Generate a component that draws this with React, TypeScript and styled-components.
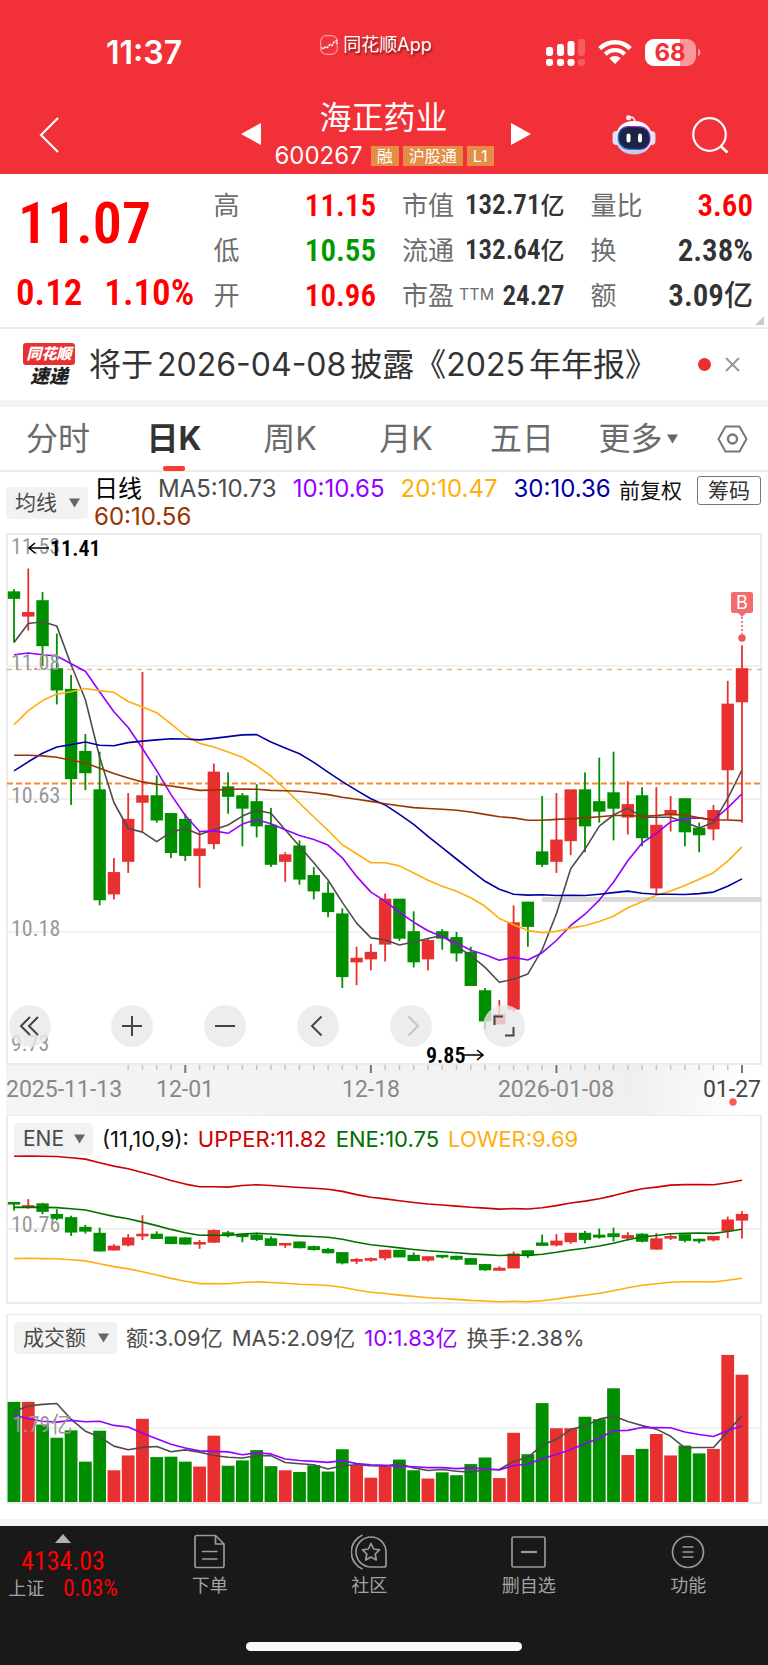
import React from "react";
import styled, { createGlobalStyle } from "styled-components";

/* ---------- palette and fonts ---------- */

const RED = "#e83030";
const GREEN = "#008f00";
const PRICE_UP = "#ff0000";
const PRICE_DOWN = "#009a00";
const GREY = "#4d4d4d";
const PURPLE = "#9500ff";
const AMBER = "#ffae0c";
const NAVY = "#0000a0";
const BROWN = "#993300";
const LINE = "#ececec";

const uiFont = `Inter, "Noto Sans CJK SC", sans-serif`;
const numberFont = `"Liberation Sans Narrow", "Roboto Condensed", Roboto, "Noto Sans CJK SC", sans-serif`;

const GlobalStyle = createGlobalStyle`
  *, *::before, *::after { box-sizing: border-box; }
  body { margin: 0; background: #fff; font-family: ${uiFont}; color: #333; }
  button, select { font: inherit; color: inherit; border: 0; background: none; padding: 0; margin: 0; }
  h1, p, dl, dd { margin: 0; font-weight: 400; }
  svg { display: block; }
`;

/* ---------- data ---------- */

// open, high, low, close
type Bar = [number, number, number, number];

const bars: Bar[] = [
  [11.33, 11.34, 11.16, 11.31], [11.25, 11.41, 11.2, 11.26], [11.3, 11.33, 11.08, 11.15], [11.07, 11.19, 10.95, 11.0],
  [11.0, 11.05, 10.61, 10.7], [10.79, 10.85, 10.66, 10.72], [10.66, 10.79, 10.27, 10.29], [10.31, 10.43, 10.29, 10.38],
  [10.42, 10.65, 10.38, 10.56], [10.62, 11.06, 10.52, 10.64], [10.64, 10.71, 10.55, 10.56], [10.58, 10.58, 10.43, 10.45],
  [10.56, 10.58, 10.42, 10.44], [10.44, 10.52, 10.33, 10.46], [10.48, 10.75, 10.46, 10.72], [10.67, 10.72, 10.58, 10.64],
  [10.64, 10.65, 10.47, 10.6], [10.62, 10.68, 10.5, 10.54], [10.54, 10.6, 10.4, 10.41], [10.42, 10.45, 10.35, 10.44],
  [10.47, 10.49, 10.34, 10.36], [10.37, 10.4, 10.29, 10.32], [10.31, 10.35, 10.23, 10.25], [10.24, 10.26, 9.99, 10.03],
  [10.08, 10.13, 10.0, 10.09], [10.09, 10.14, 10.05, 10.11], [10.14, 10.31, 10.08, 10.29], [10.29, 10.29, 10.15, 10.16],
  [10.18, 10.25, 10.06, 10.08], [10.09, 10.16, 10.05, 10.15], [10.18, 10.19, 10.12, 10.16], [10.16, 10.18, 10.08, 10.11],
  [10.11, 10.13, 10.0, 10.0], [9.98, 9.99, 9.85, 9.88], [9.87, 9.95, 9.87, 9.9], [9.92, 10.27, 9.91, 10.21],
  [10.28, 10.28, 10.13, 10.2], [10.45, 10.64, 10.4, 10.41], [10.42, 10.65, 10.38, 10.49], [10.49, 10.66, 10.44, 10.66],
  [10.66, 10.72, 10.45, 10.54], [10.62, 10.77, 10.55, 10.59], [10.65, 10.79, 10.49, 10.6], [10.57, 10.69, 10.51, 10.61],
  [10.64, 10.67, 10.47, 10.5], [10.33, 10.67, 10.31, 10.54], [10.58, 10.64, 10.52, 10.59], [10.63, 10.63, 10.47, 10.52],
  [10.53, 10.55, 10.45, 10.51], [10.53, 10.61, 10.49, 10.59], [10.73, 11.03, 10.56, 10.95], [10.96, 11.15, 10.55, 11.07],
];

// turnover, in hundreds of millions
const turnover = [
  2.43, 2.43, 1.88, 1.56, 1.74, 0.98, 1.73, 0.77, 1.13, 2.02, 1.09, 1.1, 0.98, 0.86, 1.61, 0.88, 1.01, 1.26, 0.87, 0.77,
  0.73, 0.89, 0.74, 1.28, 0.89, 0.59, 0.86, 1.03, 0.77, 0.57, 0.72, 0.65, 0.92, 1.08, 0.58, 1.68, 1.16, 2.4, 1.79, 1.79,
  2.07, 2.01, 2.76, 1.14, 1.29, 1.65, 1.13, 1.37, 1.18, 1.29, 3.57, 3.09,
];

const closes = bars.map((b) => b[3]);

// The first points of an average need days before the window, so they are given.
function average(values: number[], days: number, head: number[]): number[] {
  return values.map((_, i) =>
    i < head.length ? head[i] : values.slice(i - days + 1, i + 1).reduce((a, b) => a + b, 0) / days
  );
}

const ma5 = average(closes, 5, [11.16, 11.224, 11.23, 11.215]);
const ma10 = average(closes, 10, [11.118, 11.124, 11.118, 11.114, 11.088, 11.062, 10.993, 10.925, 10.872]);
const ma20 = average(closes, 20, [
  10.881, 10.929, 10.963, 10.985, 10.993, 11.004, 10.997, 10.991, 10.96, 10.941, 10.922, 10.884, 10.845, 10.818, 10.806,
  10.789, 10.771, 10.742, 10.708,
]);
const ma30 = average(closes, 30, [
  10.725, 10.756, 10.785, 10.806, 10.814, 10.823, 10.812, 10.81, 10.821, 10.826, 10.83, 10.834, 10.833, 10.83, 10.835,
  10.841, 10.847, 10.848, 10.823, 10.803, 10.783, 10.754, 10.721, 10.689, 10.659, 10.631, 10.61, 10.578, 10.544,
]);
const ma60 = [
  10.778, 10.778, 10.776, 10.771, 10.761, 10.752, 10.734, 10.716, 10.701, 10.688, 10.68, 10.674, 10.667, 10.659, 10.66,
  10.662, 10.664, 10.663, 10.659, 10.658, 10.656, 10.651, 10.645, 10.636, 10.629, 10.622, 10.614, 10.607, 10.601, 10.598,
  10.595, 10.592, 10.586, 10.578, 10.57, 10.566, 10.558, 10.558, 10.561, 10.563, 10.566, 10.57, 10.574, 10.574, 10.571,
  10.574, 10.578, 10.576, 10.566, 10.56, 10.559, 10.557,
];
const amount5 = average(turnover, 5, [2.2, 2.33, 2.37, 2.39]);
const amount10 = average(turnover, 10, [2.11, 2.02, 1.96, 1.94, 1.98, 1.95, 1.96, 1.86, 1.82]);

/* ---------- chart helpers ---------- */

const CHART_W = 756;
const STEP = (CHART_W - 28) / 51;
const xAt = (i: number) => 8 + i * STEP;

type Scale = (v: number) => number;

const Curve = ({ values, y, color }: { values: number[]; y: Scale; color: string }) => (
  <polyline
    fill="none"
    stroke={color}
    strokeWidth="1.6"
    strokeLinejoin="round"
    points={values.map((v, i) => `${xAt(i).toFixed(1)},${y(v).toFixed(1)}`).join(" ")}
  />
);

const Candles = ({ y }: { y: Scale }) => (
  <g>
    {bars.map(([open, high, low, close], i) => {
      const color = close >= open ? RED : GREEN;
      const top = y(Math.max(open, close));
      const bottom = y(Math.min(open, close));
      return (
        <g key={i} fill={color}>
          <rect x={xAt(i) - 0.9} y={y(high)} width="1.8" height={Math.max(1, y(low) - y(high))} />
          <rect x={xAt(i) - 6.2} y={top - 0.8} width="12.4" height={Math.max(1, bottom - top) + 1.6} />
        </g>
      );
    })}
  </g>
);

/* ---------- header ---------- */

const Page = styled.div`
  width: 100%;
  background: #fff;
`;

const Header = styled.header`
  background: #f23038;
  color: #fff;
`;

const StatusBar = styled.div`
  display: grid;
  grid-template-columns: 1fr auto 1fr;
  height: 106px;
  align-items: center;
`;

const Clock = styled.span`
  padding-left: 106px;
  font-size: 32px;
  line-height: 36px;
  font-weight: 600;
`;

const SourceApp = styled.span`
  display: flex;
  align-items: center;
  gap: 5px;
  padding: 0 16px 16px 0;
  font-size: 18px;
  line-height: 24px;
  text-shadow: 1px 2px 2px rgba(0, 0, 0, 0.5);
`;

const StatusIcons = styled.span`
  display: flex;
  justify-content: flex-end;
  align-items: center;
  gap: 13px;
  padding: 0 67px 2px 0;
`;

const NavBar = styled.nav`
  display: grid;
  grid-template-columns: 1fr auto 1fr;
  height: 68px;
  padding: 0 36px;
`;

const NavSide = styled.div<{ $end?: boolean }>`
  display: flex;
  align-items: center;
  gap: 36px;
  height: 58px;
  padding-right: ${(p) => (p.$end ? 3 : 0)}px;
  justify-content: ${(p) => (p.$end ? "flex-end" : "flex-start")};
`;

const IconButton = styled.button`
  display: flex;
  align-items: center;
  justify-content: center;
  cursor: pointer;
`;

const StockSwitcher = styled.div`
  display: flex;
  align-items: center;
  gap: 14px;
  margin-top: -12px;
  padding-left: 3px;
  height: 80px;
`;

const StockTitle = styled.div`
  display: flex;
  flex-direction: column;
  align-items: center;
  gap: 3px;
  width: 222px;
`;

const StockName = styled.h1`
  padding-right: 4px;
  font-size: 32px;
  line-height: 40px;
`;

const StockCode = styled.p`
  display: flex;
  align-items: center;
  gap: 4px;
  padding-right: 3px;
  font-size: 24px;
  line-height: 30px;
  white-space: nowrap;
`;

const Tag = styled.span`
  padding: 0 6px;
  background: #e38d46;
  font-size: 16px;
  line-height: 20px;
`;

const CodeText = styled.span`
  margin-right: 4px;
`;

/* ---------- quote ---------- */

const Quote = styled.section`
  position: relative;
  display: grid;
  grid-template-columns: minmax(0, 171fr) 162fr 162fr 162fr;
  column-gap: 26px;
  height: 155px;
  padding: 9px 15px 0 16px;
  border-bottom: 2px solid ${LINE};
`;

const PriceBlock = styled.div`
  color: ${PRICE_UP};
  font-family: ${numberFont};
  white-space: nowrap;
`;

const Price = styled.p`
  padding: 4px 0 0 2px;
  font-size: 58px;
  line-height: 72px;
  font-weight: 600;
`;

const Change = styled.p`
  display: flex;
  gap: 22px;
  padding-top: 4px;
  font-size: 37px;
  line-height: 60px;
  font-weight: 600;
`;

const Stats = styled.dl`
  display: flex;
  flex-direction: column;
`;

const Stat = styled.div`
  display: flex;
  justify-content: space-between;
  align-items: center;
  height: 45px;
  white-space: nowrap;
`;

const StatLabel = styled.dt`
  font-size: 26px;
  line-height: 32px;
  color: #6e6e6e;
`;

const Sup = styled.sup`
  margin-left: 5px;
  font-size: 16px;
  line-height: 16px;
  vertical-align: 5px;
`;

const StatValue = styled.dd<{ $color?: string; $small?: boolean }>`
  color: ${(p) => p.$color ?? "#333"};
  font-family: ${numberFont};
  font-size: ${(p) => (p.$small ? 27 : 31)}px;
  line-height: 40px;
  font-weight: 600;
`;

const Unit = styled.span<{ $small?: boolean }>`
  font-size: ${(p) => (p.$small ? 24 : 29)}px;
  font-weight: 500;
`;

const ExpandCorner = styled.svg`
  position: absolute;
  right: 4px;
  bottom: 2px;
`;

/* ---------- notice ---------- */

const Notice = styled.section`
  display: flex;
  align-items: center;
  height: 78px;
  padding: 0 28px 0 22px;
  border-bottom: 7px solid #f4f4f4;
`;

const NoticeText = styled.p`
  flex: 1;
  padding-left: 13px;
  font-size: 32px;
  line-height: 40px;
  white-space: nowrap;
  text-autospace: normal;
`;

const Dot = styled.span`
  width: 13px;
  height: 13px;
  margin-right: 14px;
  border-radius: 50%;
  background: ${RED};
`;

const NewsBadge = styled.span`
  display: flex;
  flex-direction: column;
  align-items: center;
  width: 54px;
  padding-top: 2px;
  font-style: italic;
  font-weight: 900;
`;

const BadgeTop = styled.span`
  padding: 0 3px;
  border-radius: 3px;
  background: ${RED};
  color: #fff;
  font-size: 15px;
  line-height: 22px;
  white-space: nowrap;
`;

const BadgeBottom = styled.span`
  font-size: 19px;
  line-height: 24px;
  color: #222;
`;

/* ---------- tabs ---------- */

const Tabs = styled.div`
  display: flex;
  align-items: stretch;
  height: 65px;
  border-bottom: 2px solid ${LINE};
`;

const Tab = styled.button<{ $active?: boolean }>`
  position: relative;
  display: flex;
  flex: 1;
  align-items: center;
  justify-content: center;
  gap: 4px;
  font-size: 32px;
  line-height: 40px;
  font-weight: ${(p) => (p.$active ? 700 : 400)};
  color: ${(p) => (p.$active ? "#333" : "#6b6b6b")};
  cursor: pointer;

  &::after {
    content: "";
    display: ${(p) => (p.$active ? "block" : "none")};
    position: absolute;
    left: calc(50% - 11px);
    bottom: -1px;
    width: 22px;
    height: 5px;
    border-radius: 2px;
    background: #fb3b30;
  }
`;

const SettingsButton = styled(IconButton)`
  width: 72px;
`;

/* ---------- indicators ---------- */

const Legend = styled.div`
  display: flex;
  align-items: flex-start;
  height: 61px;
  padding: 0 7px 0 6px;
`;

const Picker = styled.label<{ $top?: number }>`
  position: relative;
  display: inline-flex;
  flex: none;
  align-items: center;
  height: 32px;
  margin-top: ${(p) => p.$top ?? 0}px;
  border-radius: 4px;
  background: #f2f2f2;
  color: #4a4a4a;

  svg {
    position: absolute;
    right: 8px;
    pointer-events: none;
  }
`;

const PickerSelect = styled.select<{ $width: number }>`
  appearance: none;
  width: ${(p) => p.$width}px;
  height: 32px;
  padding: 0 0 0 9px;
  font-size: 21px;
  line-height: 32px;
`;

const LegendItems = styled.div`
  display: flex;
  flex: 1;
  flex-wrap: wrap;
  column-gap: 16px;
  padding: 3px 0 0 6px;
  font-size: 24px;
  line-height: 28px;
`;

const LegendItem = styled.span<{ $color: string }>`
  color: ${(p) => p.$color};
  white-space: nowrap;
`;

const AdjustButton = styled.button`
  flex: none;
  margin: 5px 15px 0 0;
  font-size: 21px;
  line-height: 28px;
  color: #111;
`;

const ChipsButton = styled.button`
  flex: none;
  width: 64px;
  height: 29px;
  margin-top: 4px;
  border: 1px solid #777;
  border-radius: 3px;
  font-size: 21px;
  line-height: 26px;
`;

/* ---------- charts ---------- */

const ChartArea = styled.section`
  position: relative;
  margin: 0 6px;
`;

const Chart = styled.svg`
  width: 100%;
  height: auto;
  overflow: visible;
`;

const AxisText = styled.text`
  font-family: ${numberFont};
  font-size: 22px;
  fill: #999;
`;

const MarkText = styled.text`
  font-family: ${numberFont};
  font-size: 22px;
  font-weight: 600;
  fill: #000;
`;

const DateText = styled.text<{ $strong?: boolean }>`
  font-family: Roboto, sans-serif;
  font-size: 23px;
  fill: ${(p) => (p.$strong ? "#444" : "#888")};
`;

const BadgeLetter = styled.text`
  font-family: Inter, sans-serif;
  font-size: 18px;
  fill: #fff;
`;

const Timeline = styled.div`
  background: linear-gradient(100deg, #f4f4f4 0%, #f2f2f2 70%, #efefef 82%, #fff 98%);
`;

const ChartControls = styled.div`
  position: absolute;
  left: 3px;
  bottom: 68px;
  display: flex;
  gap: 51px;
`;

const RoundButton = styled.button<{ $first?: boolean; $faded?: boolean }>`
  display: flex;
  align-items: center;
  justify-content: center;
  width: 42px;
  height: 42px;
  margin-right: ${(p) => (p.$first ? 9 : 0)}px;
  border-radius: 50%;
  background: rgba(232, 232, 232, 0.8);
  color: ${(p) => (p.$faded ? "#c4c4c4" : "#444")};
`;

const Panel = styled.section<{ $gap?: number }>`
  margin: 0 6px ${(p) => p.$gap ?? 0}px;
  border: 2px solid ${LINE};
  border-width: 1px 2px 2px;
`;

const PanelHead = styled.div`
  display: flex;
  align-items: center;
  height: 40px;
  gap: 9px;
  padding: 5px 6px 0;
  font-size: 22px;
  line-height: 28px;
`;

const PanelBody = styled.div`
  margin: 0 -2px;
`;

/* ---------- footer ---------- */

const Footer = styled.footer`
  height: 148px;
  border-top: 7px solid #f4f4f4;
  background: #191919;
  color: #a3a3a3;
`;

const FooterNav = styled.nav`
  display: flex;
  height: 105px;
  padding-top: 8px;
`;

const IndexBox = styled.div`
  display: flex;
  flex-direction: column;
  align-items: center;
  width: 126px;
  margin-right: 4px;
`;

const IndexValue = styled.span`
  color: ${PRICE_UP};
  font-family: ${numberFont};
  font-size: 26px;
  line-height: 29px;
  padding-top: 4px;
`;

const IndexRow = styled.span`
  display: flex;
  gap: 19px;
  font-size: 18px;
  line-height: 26px;
`;

const IndexChange = styled.span`
  color: ${PRICE_UP};
  font-family: ${numberFont};
  font-size: 23px;
`;

const FooterLink = styled.a`
  display: flex;
  flex: 1;
  flex-direction: column;
  align-items: center;
  gap: 4px;
  color: inherit;
  text-decoration: none;
  font-size: 18px;
  line-height: 24px;
`;

const HomeIndicator = styled.div`
  width: 36%;
  height: 9px;
  margin: 11px auto 0;
  border-radius: 5px;
  background: #fafafa;
`;

/* ---------- icons ---------- */

const Caret = ({ size = 11 }: { size?: number }) => (
  <svg width={size} height={size - 1} viewBox="0 0 11 10" aria-hidden="true">
    <path d="M0 0.5H11L5.5 9.5Z" fill="#666" />
  </svg>
);

const AppGlyph = () => (
  <svg width="18" height="20" viewBox="0 0 18 20" aria-hidden="true">
    <rect x="0.7" y="0.7" width="16.6" height="18.6" rx="5.5" fill="#ee3440" stroke="#ff9a9a" strokeWidth="1.2" />
    <path d="M1.5 12.5L3.5 14L5.5 11.5L7.5 12.5L10 9.5L12 10.5L14 7L16.5 5.5V9" fill="none" stroke="#fff" strokeWidth="1.5" strokeDasharray="2.4 0.9" />
  </svg>
);

const SignalIcon = () => (
  <svg width="39" height="27" viewBox="0 0 39 27" fill="#fff" aria-hidden="true">
    <rect x="0" y="8" width="7" height="9" rx="2.4" />
    <rect x="11" y="5" width="7" height="12" rx="2.4" />
    <rect x="21.500" y="2" width="7" height="15" rx="2.4" />
    <rect x="32" y="0" width="7" height="17" rx="2.4" opacity="0.22" />
    <rect x="0" y="20" width="7" height="7" rx="2.4" />
    <rect x="11" y="20" width="7" height="7" rx="2.4" />
    <rect x="21.500" y="20" width="7" height="7" rx="2.4" />
    <rect x="32" y="20" width="7" height="7" rx="2.4" opacity="0.22" />
  </svg>
);

const WifiIcon = () => (
  <svg width="34" height="26" viewBox="0 0 34 26" aria-hidden="true">
    <g fill="none" stroke="#fff" strokeWidth="4.4">
      <path d="M1.800 9.600A21.500 21.500 0 0 1 32.200 9.600" />
      <path d="M7.300 15.200A13.700 13.700 0 0 1 26.700 15.200" />
    </g>
    <path d="M11.300 19.200A8.200 8.200 0 0 1 22.700 19.200L17 25Z" fill="#fff" />
  </svg>
);

const BatteryIcon = () => (
  <svg width="56" height="27" viewBox="0 0 56 27" aria-hidden="true">
    <rect width="51" height="27" rx="9" fill="#fff" opacity="0.5" />
    <path d="M9 0H35V27H9A9 9 0 0 1 0 18V9A9 9 0 0 1 9 0Z" fill="#fff" />
    <path d="M53 9.500Q55.500 10.500 55.500 13.500T53 17.500Z" fill="#fff" opacity="0.5" />
    <text x="25" y="22" textAnchor="middle" fontFamily="Inter, sans-serif" fontSize="24" fontWeight="700" fill="#f23038">
      68
    </text>
  </svg>
);

const BackIcon = () => (
  <svg width="24" height="36" viewBox="0 0 24 36" fill="none" stroke="#fff" strokeWidth="2.200" aria-hidden="true">
    <path d="M22 1L5 18L22 35" />
  </svg>
);

const Triangle = ({ flip }: { flip?: boolean }) => (
  <svg width="20" height="22" viewBox="0 0 20 22" fill="#fff" aria-hidden="true">
    <path d={flip ? "M0 0L20 11L0 22Z" : "M20 0L0 11L20 22Z"} />
  </svg>
);

const RobotIcon = () => (
  <svg width="44" height="40" viewBox="0 0 44 40" aria-hidden="true">
    <defs>
      <linearGradient id="shell" x1="0" y1="0" x2="0" y2="1">
        <stop offset="0" stopColor="#ffffff" />
        <stop offset="0.7" stopColor="#e8e9fb" />
        <stop offset="1" stopColor="#bfc1e6" />
      </linearGradient>
      <linearGradient id="visor" x1="0" y1="1" x2="1" y2="0">
        <stop offset="0" stopColor="#3fb6ff" />
        <stop offset="0.5" stopColor="#3a2f8f" />
        <stop offset="1" stopColor="#b14dff" />
      </linearGradient>
    </defs>
    <path d="M17 2.500Q22.500 1 23 7" fill="none" stroke="#e9eafa" strokeWidth="1.800" />
    <circle cx="16.500" cy="2.700" r="2.500" fill="#f4f4ff" />
    <rect x="0.500" y="16" width="8" height="14" rx="4" fill="#dcdff5" />
    <rect x="35.500" y="16" width="8" height="14" rx="4" fill="#dcdff5" />
    <path d="M22 6C34 6 40 13 40 23C40 33 33 39.500 22 39.500S4 33 4 23C4 13 10 6 22 6Z" fill="url(#shell)" />
    <rect x="5.500" y="11" width="33" height="24" rx="11" fill="url(#visor)" />
    <rect x="7" y="12.300" width="30.500" height="21.500" rx="10" fill="#1c2446" />
    <rect x="14.500" y="18.500" width="4" height="9" rx="2" fill="#fff" />
    <rect x="26" y="18.500" width="4" height="9" rx="2" fill="#fff" />
  </svg>
);

const SearchIcon = () => (
  <svg width="37" height="37" viewBox="0 0 37 37" fill="none" stroke="#fff" strokeWidth="2.200" aria-hidden="true">
    <circle cx="17.500" cy="17.500" r="16.300" />
    <path d="M28.500 29L35.500 35.500" strokeWidth="2.800" />
  </svg>
);

const CloseIcon = () => (
  <svg width="15" height="15" viewBox="0 0 15 15" stroke="#999" strokeWidth="2" aria-hidden="true">
    <path d="M1 1L14 14M14 1L1 14" />
  </svg>
);

const HexIcon = () => (
  <svg width="31" height="28" viewBox="0 0 31 28" fill="none" stroke="#777" strokeWidth="2" strokeLinejoin="round" aria-hidden="true">
    <path d="M8.500 1.500H22.500L29.500 14L22.500 26.500H8.500L1.500 14Z" />
    <circle cx="15.500" cy="14" r="4.500" strokeWidth="2.400" />
  </svg>
);

const ControlGlyph = ({ d }: { d: string }) => (
  <svg width="24" height="24" viewBox="0 0 24 24" fill="none" stroke="currentColor" strokeWidth="2" aria-hidden="true">
    <path d={d} />
  </svg>
);

const FooterGlyph = ({ children }: { children: React.ReactNode }) => (
  <svg width="36" height="36" viewBox="0 0 36 36" fill="none" stroke="#999" strokeWidth="1.700" strokeLinejoin="round" aria-hidden="true">
    {children}
  </svg>
);

/* ---------- charts ---------- */

const priceY: Scale = (p) => 266 - (p - 10.63) * 295.5;
const eneY: Scale = (p) => 73 - (p - 10.76) * 46;
const amountY: Scale = (v) => 147 - v * 41.2;

const MainChart = () => (
  <Chart viewBox={`0 0 ${CHART_W} 531`} role="img" aria-label="日K线图">
    <rect x="1" y="1" width="754" height="530" fill="none" stroke={LINE} strokeWidth="2" />
    {[133, 266, 399].map((y) => (
      <path key={y} d={`M1 ${y}H755`} stroke="#f1f1f1" strokeWidth="2" />
    ))}
    <rect x="536" y="364" width="220" height="5" fill="#dadada" />
    <path d="M1 136.500H756" stroke="#dcbb94" strokeWidth="1.400" strokeDasharray="5 5" />
    <path d="M1 250.500H756" stroke="#f98a2c" strokeWidth="1.800" strokeDasharray="6 3" />
    <Candles y={priceY} />
    <Curve values={ma5} y={priceY} color={GREY} />
    <Curve values={ma10} y={priceY} color={PURPLE} />
    <Curve values={ma20} y={priceY} color={AMBER} />
    <Curve values={ma30} y={priceY} color={NAVY} />
    <Curve values={ma60} y={priceY} color={BROWN} />
    <AxisText x="5" y="21">11.53</AxisText>
    <AxisText x="5" y="137">11.08</AxisText>
    <AxisText x="5" y="270">10.63</AxisText>
    <AxisText x="5" y="403">10.18</AxisText>
    <AxisText x="5" y="518">9.73</AxisText>
    <path d="M43 15H23M29 10L23 15L29 20" fill="none" stroke="#000" strokeWidth="1.600" />
    <MarkText x="44" y="23">11.41</MarkText>
    <MarkText x="420" y="530">9.85</MarkText>
    <path d="M458 522H477M471 517L477 522L471 527" fill="none" stroke="#000" strokeWidth="1.600" />
    <g fill="#f06c6f">
      <rect x="725" y="59" width="22" height="21" rx="2" />
      <path d="M732 80H740L736 84Z" />
      <path d="M736 84V101" stroke="#ee5a5e" strokeWidth="1.600" strokeDasharray="2 2" />
      <circle cx="736" cy="105" r="3.700" fill="#ec5459" />
    </g>
    <BadgeLetter x="736" y="76" textAnchor="middle">B</BadgeLetter>
  </Chart>
);

const majorTicks = [12, 25, 38, 51];

const TimeAxis = () => (
  <Timeline>
    <Chart viewBox={`0 0 ${CHART_W} 51`} role="img" aria-label="日期">
      {bars.map((_, i) =>
        i < 8 ? null : (
          <path
            key={i}
            d={`M${xAt(i)} 1V${majorTicks.includes(i) ? 9 : 6}`}
            stroke={majorTicks.includes(i) ? "#777" : "#c4c4c4"}
            strokeWidth={majorTicks.includes(i) ? 2 : 1.5}
          />
        )
      )}
      <DateText x="0" y="33">2025-11-13</DateText>
      <DateText x="179" y="33" textAnchor="middle">12-01</DateText>
      <DateText x="365" y="33" textAnchor="middle">12-18</DateText>
      <DateText x="550" y="33" textAnchor="middle">2026-01-08</DateText>
      <DateText x="755" y="33" textAnchor="end" $strong>01-27</DateText>
      <circle cx="727" cy="38" r="3.700" fill="#fb5a5a" />
    </Chart>
  </Timeline>
);

const EneChart = () => (
  <Chart viewBox={`0 0 ${CHART_W} 146`} role="img" aria-label="ENE 轨道线">
    <path d="M1 73H755" stroke="#f1f1f1" strokeWidth="2" />
    <AxisText x="5" y="76">10.76</AxisText>
    <Candles y={eneY} />
    <Curve values={ma10.map((v) => v * 1.11)} y={eneY} color="#cc0000" />
    <Curve values={ma10.map((v) => v * 1.01)} y={eneY} color="#007000" />
    <Curve values={ma10.map((v) => v * 0.91)} y={eneY} color={AMBER} />
  </Chart>
);

const AmountChart = () => (
  <Chart viewBox={`0 0 ${CHART_W} 147`} role="img" aria-label="成交额柱状图">
    <path d="M1 73H755" stroke="#f1f1f1" strokeWidth="2" />
    {turnover.map((v, i) => (
      <rect
        key={i}
        x={xAt(i) - 6.4}
        y={amountY(v)}
        width="12.800"
        height={147 - amountY(v)}
        fill={bars[i][3] >= bars[i][0] ? RED : GREEN}
      />
    ))}
    <Curve values={amount5} y={amountY} color={GREY} />
    <Curve values={amount10} y={amountY} color={PURPLE} />
    <AxisText x="6" y="77">1.79亿</AxisText>
  </Chart>
);

/* ---------- page ---------- */

const tabs = ["分时", "日K", "周K", "月K", "五日"];

const controls = [
  { label: "最早", d: "M12 3L3 12L12 21M20 3L11 12L20 21" },
  { label: "放大", d: "M12 2V22M2 12H22" },
  { label: "缩小", d: "M2 12H22" },
  { label: "左移", d: "M15.500 2.500L6 12L15.500 21.500" },
  { label: "右移", d: "M9.500 2.500L19 12L9.500 21.500" },
  { label: "全屏", d: "M2.500 11V2.500H11M21.500 13V21.500H13" },
];

export default function App() {
  return (
    <Page>
      <GlobalStyle />
      <Header>
        <StatusBar>
          <Clock>11:37</Clock>
          <SourceApp>
            <AppGlyph />
            同花顺App
          </SourceApp>
          <StatusIcons>
            <SignalIcon />
            <WifiIcon />
            <BatteryIcon />
          </StatusIcons>
        </StatusBar>
        <NavBar>
          <NavSide>
            <IconButton aria-label="返回">
              <BackIcon />
            </IconButton>
          </NavSide>
          <StockSwitcher>
            <IconButton aria-label="上一只">
              <Triangle />
            </IconButton>
            <StockTitle>
              <StockName>海正药业</StockName>
              <StockCode>
                <CodeText>600267</CodeText>
                <Tag>融</Tag>
                <Tag>沪股通</Tag>
                <Tag>L1</Tag>
              </StockCode>
            </StockTitle>
            <IconButton aria-label="下一只">
              <Triangle flip />
            </IconButton>
          </StockSwitcher>
          <NavSide $end>
            <IconButton aria-label="智能助手">
              <RobotIcon />
            </IconButton>
            <IconButton aria-label="搜索">
              <SearchIcon />
            </IconButton>
          </NavSide>
        </NavBar>
      </Header>

      <main>
        <Quote>
          <PriceBlock>
            <Price>11.07</Price>
            <Change>
              <span>0.12</span>
              <span>1.10%</span>
            </Change>
          </PriceBlock>
          <Stats>
            <Stat>
              <StatLabel>高</StatLabel>
              <StatValue $color={PRICE_UP}>11.15</StatValue>
            </Stat>
            <Stat>
              <StatLabel>低</StatLabel>
              <StatValue $color={PRICE_DOWN}>10.55</StatValue>
            </Stat>
            <Stat>
              <StatLabel>开</StatLabel>
              <StatValue $color={PRICE_UP}>10.96</StatValue>
            </Stat>
          </Stats>
          <Stats>
            <Stat>
              <StatLabel>市值</StatLabel>
              <StatValue $small>132.71<Unit $small>亿</Unit></StatValue>
            </Stat>
            <Stat>
              <StatLabel>流通</StatLabel>
              <StatValue $small>132.64<Unit $small>亿</Unit></StatValue>
            </Stat>
            <Stat>
              <StatLabel>市盈<Sup>TTM</Sup></StatLabel>
              <StatValue $small>24.27</StatValue>
            </Stat>
          </Stats>
          <Stats>
            <Stat>
              <StatLabel>量比</StatLabel>
              <StatValue $color={PRICE_UP}>3.60</StatValue>
            </Stat>
            <Stat>
              <StatLabel>换</StatLabel>
              <StatValue>2.38%</StatValue>
            </Stat>
            <Stat>
              <StatLabel>额</StatLabel>
              <StatValue>3.09<Unit>亿</Unit></StatValue>
            </Stat>
          </Stats>
          <ExpandCorner width="9" height="9" viewBox="0 0 9 9" aria-hidden="true">
            <path d="M9 0V9H0Z" fill="#ccc" />
          </ExpandCorner>
        </Quote>

        <Notice>
          <NewsBadge>
            <BadgeTop>同花顺</BadgeTop>
            <BadgeBottom>速递</BadgeBottom>
          </NewsBadge>
          <NoticeText>将于2026-04-08披露《2025年年报》</NoticeText>
          <Dot />
          <IconButton aria-label="关闭">
            <CloseIcon />
          </IconButton>
        </Notice>

        <Tabs role="tablist">
          {tabs.map((name) => (
            <Tab key={name} role="tab" aria-selected={name === "日K"} $active={name === "日K"}>
              {name}
            </Tab>
          ))}
          <Tab aria-haspopup="menu">
            更多
            <Caret />
          </Tab>
          <SettingsButton aria-label="设置">
            <HexIcon />
          </SettingsButton>
        </Tabs>

        <Legend>
          <Picker $top={15}>
            <PickerSelect $width={82} aria-label="主图指标" defaultValue="均线">
              <option>均线</option>
              <option>BOLL</option>
            </PickerSelect>
            <Caret />
          </Picker>
          <LegendItems>
            <LegendItem $color="#000">日线</LegendItem>
            <LegendItem $color={GREY}>MA5:10.73</LegendItem>
            <LegendItem $color={PURPLE}>10:10.65</LegendItem>
            <LegendItem $color={AMBER}>20:10.47</LegendItem>
            <LegendItem $color={NAVY}>30:10.36</LegendItem>
            <LegendItem $color={BROWN}>60:10.56</LegendItem>
          </LegendItems>
          <AdjustButton>前复权</AdjustButton>
          <ChipsButton>筹码</ChipsButton>
        </Legend>

        <ChartArea>
          <MainChart />
          <TimeAxis />
          <ChartControls>
            {controls.map((c, i) => (
              <RoundButton key={c.label} aria-label={c.label} $first={i === 0} $faded={c.label === "右移"}>
                <ControlGlyph d={c.d} />
              </RoundButton>
            ))}
          </ChartControls>
        </ChartArea>

        <Panel $gap={10}>
          <PanelHead>
            <Picker>
              <PickerSelect $width={79} aria-label="副图指标一" defaultValue="ENE">
                <option>ENE</option>
                <option>MACD</option>
              </PickerSelect>
              <Caret />
            </Picker>
            <LegendItem $color="#111">(11,10,9):</LegendItem>
            <LegendItem $color="#cc0000">UPPER:11.82</LegendItem>
            <LegendItem $color="#007000">ENE:10.75</LegendItem>
            <LegendItem $color={AMBER}>LOWER:9.69</LegendItem>
          </PanelHead>
          <PanelBody>
            <EneChart />
          </PanelBody>
        </Panel>

        <Panel $gap={15}>
          <PanelHead>
            <Picker>
              <PickerSelect $width={103} aria-label="副图指标二" defaultValue="成交额">
                <option>成交额</option>
                <option>成交量</option>
              </PickerSelect>
              <Caret />
            </Picker>
            <LegendItem $color={GREY}>额:3.09亿</LegendItem>
            <LegendItem $color={GREY}>MA5:2.09亿</LegendItem>
            <LegendItem $color={PURPLE}>10:1.83亿</LegendItem>
            <LegendItem $color={GREY}>换手:2.38%</LegendItem>
          </PanelHead>
          <PanelBody>
            <AmountChart />
          </PanelBody>
        </Panel>
      </main>

      <Footer>
        <FooterNav>
          <IndexBox>
            <svg width="16" height="9" viewBox="0 0 16 9" aria-hidden="true">
              <path d="M8 0L16 9H0Z" fill="#b0b0b0" />
            </svg>
            <IndexValue>4134.03</IndexValue>
            <IndexRow>
              上证
              <IndexChange>0.03%</IndexChange>
            </IndexRow>
          </IndexBox>
          <FooterLink href="#order">
            <FooterGlyph>
              <path d="M5 1.500H23.500L32 10V32Q32 33.500 30.500 33.500H4.500Q3 33.500 3 32V3.500Q3 1.500 5 1.500ZM23.500 1.500V10H32M10 17.500H25.500M10 25H25.500" />
            </FooterGlyph>
            下单
          </FooterLink>
          <FooterLink href="#community">
            <FooterGlyph>
              <path d="M20 3A15 15 0 0 1 35 18V31Q35 33 33 33H20A15 15 0 0 1 20 3Z" />
              <path d="M11.500 1A18.500 18.500 0 0 0 11.500 35" />
              <path d="M20 9.500L22.600 15L28.500 15.800L24.200 20L25.300 26L20 23L14.700 26L15.800 20L11.500 15.800L17.400 15Z" />
            </FooterGlyph>
            社区
          </FooterLink>
          <FooterLink href="#remove">
            <FooterGlyph>
              <rect x="1" y="3" width="33" height="30" rx="1.500" />
              <path d="M10 18H26" strokeWidth="2.200" />
            </FooterGlyph>
            删自选
          </FooterLink>
          <FooterLink href="#functions">
            <FooterGlyph>
              <circle cx="18" cy="18" r="15.500" />
              <path d="M12.500 13H23.500M12.500 18H23.500M12.500 23H23.500" />
            </FooterGlyph>
            功能
          </FooterLink>
        </FooterNav>
        <HomeIndicator />
      </Footer>
    </Page>
  );
}
